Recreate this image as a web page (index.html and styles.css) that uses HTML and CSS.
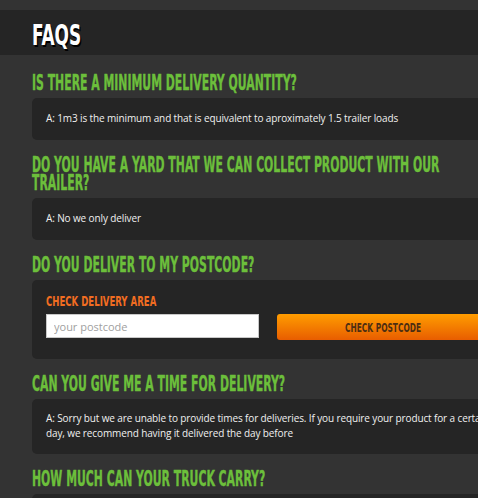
FILE: index.html
```html
<!DOCTYPE html>
<html>
<head>
<meta charset="utf-8">
<link rel="stylesheet" href="styles.css">
</head>
<body>
<div class="topbar"></div>
<header class="hero"><h1 class="hero-title">FAQS</h1></header>
<main class="faqs">
  <section class="faq">
    <h2 class="q">IS THERE A MINIMUM DELIVERY QUANTITY?</h2>
    <div class="a">A: 1m3 is the minimum and that is equivalent to aproximately 1.5 trailer loads</div>
  </section>
  <section class="faq">
    <h2 class="q">DO YOU HAVE A YARD THAT WE CAN COLLECT PRODUCT WITH OUR TRAILER?</h2>
    <div class="a">A: No we only deliver</div>
  </section>
  <section class="faq">
    <h2 class="q">DO YOU DELIVER TO MY POSTCODE?</h2>
    <div class="a a-form">
      <div class="check-title">CHECK DELIVERY AREA</div>
      <div class="check-row">
        <input class="postcode" type="text" placeholder="your postcode">
        <button class="check-btn"><span class="btn-label">CHECK POSTCODE</span></button>
      </div>
    </div>
  </section>
  <section class="faq">
    <h2 class="q">CAN YOU GIVE ME A TIME FOR DELIVERY?</h2>
    <div class="a a-two">A: Sorry but we are unable to provide times for deliveries. If you require your product for a certain day, we recommend having it delivered the day before</div>
  </section>
  <section class="faq">
    <h2 class="q">HOW MUCH CAN YOUR TRUCK CARRY?</h2>
    <div class="a a-empty"></div>
  </section>
</main>
</body>
</html>
```
FILE: styles.css
```css
html, body {
  margin: 0;
  padding: 0;
  background: #333333;
  overflow: hidden;
}
body {
  width: 478px;
  height: 498px;
  font-family: "Open Sans", sans-serif;
}
.topbar {
  height: 10px;
  background: #333333;
}
.hero {
  height: 45px;
  box-sizing: border-box;
  background: #252525;
  padding: 10px 0 0 32px;
}
.hero-title {
  margin: 0;
  width: 200px;
  font-family: "DejaVu Sans Condensed", sans-serif;
  font-weight: bold;
  font-size: 29px;
  line-height: 30px;
  color: #ffffff;
  text-shadow: 2px 2px 0 #000;
  transform: scaleX(0.65);
  transform-origin: left top;
}
.faqs {
  padding: 19px 0 0 32px;
  width: 560px;
}
.faq {
  margin-bottom: 16px;
}
.q {
  margin: 0 0 6px;
  width: 770px;
  font-family: "DejaVu Sans Condensed", sans-serif;
  font-weight: bold;
  font-size: 22px;
  line-height: 18px;
  color: #6cbf3b;
  -webkit-text-stroke: 0.4px #6cbf3b;
  transform: scaleX(0.55);
  transform-origin: left top;
}
.a {
  background: #252525;
  border-radius: 5px;
  padding: 13px 14px 14px;
  color: #f0f0f0;
  font-size: 10px;
  line-height: 15px;
  letter-spacing: -0.12px;
  width: 455px;
}
.a-two {
  padding: 12px 14px 13px;
}
.a-form {
  padding: 13px 14px 19px;
}
.a-empty {
  min-height: 15px;
}
.check-title {
  width: 260px;
  font-family: "DejaVu Sans Condensed", sans-serif;
  font-weight: bold;
  font-size: 14px;
  line-height: 16px;
  color: #f26d21;
  margin-bottom: 5px;
  transform: scaleX(0.68);
  transform-origin: left top;
  letter-spacing: 0;
}
.check-row {
  display: grid;
  grid-template-columns: 213px 213px;
  column-gap: 18px;
  align-items: start;
}
.postcode {
  width: 213px;
  height: 24px;
  box-sizing: border-box;
  border: 1px solid #c8c8c8;
  background: #fff;
  padding: 0 7px;
  font-family: "Open Sans", sans-serif;
  font-size: 11px;
  color: #333;
  outline: none;
}
.postcode::placeholder {
  color: #a0a0a0;
}
.check-btn {
  width: 213px;
  height: 26px;
  border: none;
  border-radius: 3px;
  background: linear-gradient(#ff9d00, #e85d00);
  padding: 0;
  text-align: center;
  cursor: pointer;
}
.btn-label {
  display: inline-block;
  font-family: "DejaVu Sans Condensed", sans-serif;
  font-weight: bold;
  font-size: 12px;
  color: #4d2e12;
  transform: scaleX(0.69);
  transform-origin: center;
}
```
